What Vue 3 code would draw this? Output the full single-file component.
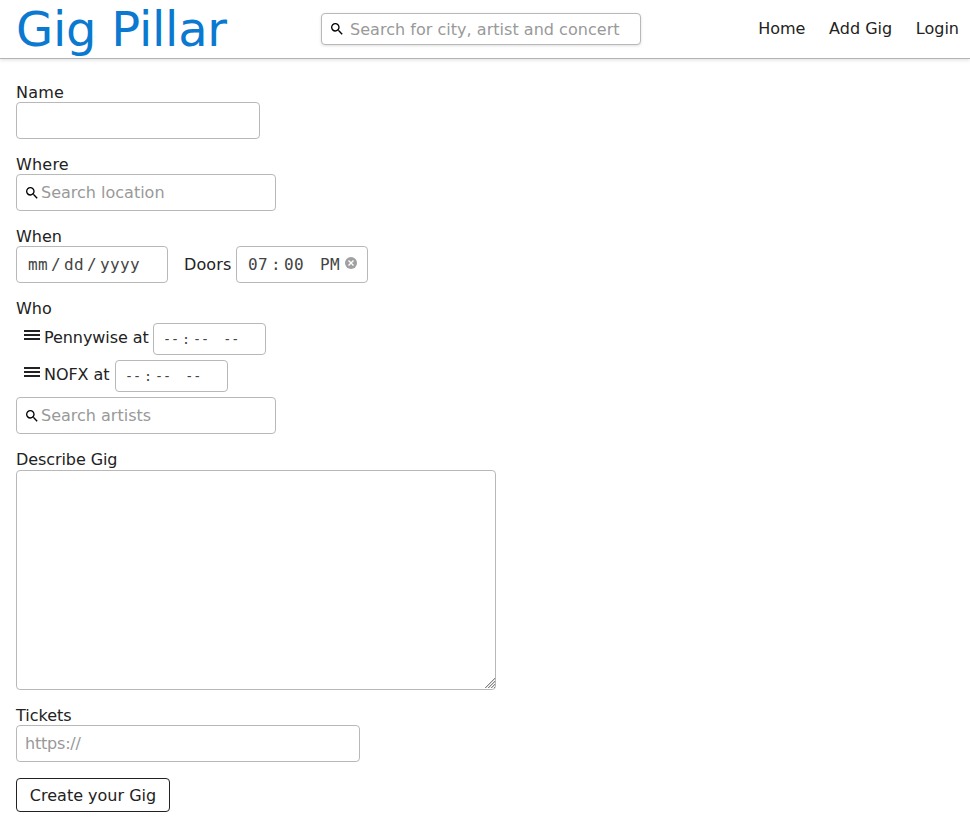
<script setup>
import { ref } from 'vue'

const links = ['Home', 'Add Gig', 'Login']
const artists = ref([{ name: 'Pennywise', width: 104 }, { name: 'NOFX', width: 66 }])
const glass = 'M15.5 14h-.79l-.28-.27A6.471 6.471 0 0 0 16 9.5 6.5 6.5 0 1 0 9.5 16c1.61 0 3.09-.59 4.23-1.57l.27.28v.79l5 4.99L20.49 19l-4.99-5zm-6 0C7.01 14 5 11.99 5 9.5S7.01 5 9.5 5 14 7.01 14 9.5 11.99 14 9.5 14z'
</script>

<template>
  <div class="page">
    <header class="header">
      <h1 class="brand">Gig Pillar</h1>
      <div class="search top-search">
        <svg class="glass" viewBox="0 0 24 24"><path :d="glass" /></svg>
        <input type="text" placeholder="Search for city, artist and concert" />
      </div>
      <nav class="nav">
        <a v-for="link in links" :key="link">{{ link }}</a>
      </nav>
    </header>

    <form class="form" @submit.prevent>
      <div class="field">
        <label class="wide">Name</label>
        <input class="box name" type="text" />
      </div>

      <div class="field">
        <label class="wide">Where</label>
        <div class="box search place">
          <svg class="glass" viewBox="0 0 24 24"><path :d="glass" /></svg>
          <input type="text" placeholder="Search location" />
        </div>
      </div>

      <div class="field">
        <label>When</label>
        <div class="when">
          <div class="box date">
            <span>mm</span><i>/</i><span>dd</span><i>/</i><span>yyyy</span>
          </div>
          <span class="doors">Doors</span>
          <div class="box time">
            <span>07</span><i>:</i><span>00</span><span class="half">PM</span>
            <svg class="clear" viewBox="0 0 12 12">
              <circle cx="6" cy="6" r="6" />
              <path d="M3.5 3.5l5 5M8.5 3.5l-5 5" />
            </svg>
          </div>
        </div>
      </div>

      <div class="field">
        <label>Who</label>
        <ul class="artists">
          <li v-for="artist in artists" :key="artist.name">
            <span class="grip"><b></b><b></b><b></b></span>
            <span class="artist" :style="{ width: artist.width + 'px' }">{{ artist.name }} at</span>
            <div class="box slot">
              <span>--</span><i>:</i><span>--</span><span class="half">--</span>
            </div>
          </li>
        </ul>
        <div class="box search place">
          <svg class="glass" viewBox="0 0 24 24"><path :d="glass" /></svg>
          <input type="text" placeholder="Search artists" />
        </div>
      </div>

      <div class="field about">
        <label>Describe Gig</label>
        <div class="area">
          <textarea class="box"></textarea>
          <svg class="resize" viewBox="0 0 11 11" shape-rendering="crispEdges">
            <path class="light" d="M1.5 10.5l9-9M4.5 10.5l6-6M7.5 10.5l3-3" />
            <path d="M0.5 10.5l10-10M3.5 10.5l7-7M6.5 10.5l4-4M9.5 10.5l1-1" />
          </svg>
        </div>
      </div>

      <div class="field">
        <label>Tickets</label>
        <input class="box tickets" type="text" placeholder="https://" />
      </div>

      <button class="create" type="submit">Create your Gig</button>
    </form>
  </div>
</template>

<style>
body {
  margin: 0;
  background: #fff;
}
</style>

<style scoped>
.page {
  height: 840px;
  overflow: hidden;
  color: #222;
  font: 16px/19px "DejaVu Sans", sans-serif;
}
.page * {
  box-sizing: border-box;
}
.header {
  display: grid;
  grid-template-columns: 305px 320px 1fr;
  align-items: center;
  height: 59px;
  padding: 0 11px 0 16px;
  border-bottom: 1px solid #b3b3b3;
  box-shadow: 0 1px 4px rgba(0, 0, 0, 0.13);
}
.brand {
  margin: 0;
  color: #0b79d0;
  font-size: 48px;
  font-weight: 400;
  line-height: 58px;
  letter-spacing: -0.25px;
}
.nav {
  display: flex;
  justify-content: flex-end;
  gap: 23.7px;
  padding-bottom: 2px;
}
input,
textarea,
button {
  margin: 0;
  color: #222;
  font: inherit;
  outline: 0;
}
::placeholder {
  color: #999;
  opacity: 1;
}
.box,
.top-search {
  border: 1px solid #b8b8b8;
  border-radius: 4px;
  background: #fff;
}
.search {
  display: flex;
  align-items: center;
}
.search input {
  flex: 1;
  min-width: 0;
  height: 19px;
  padding: 0;
  border: 0;
  background: none;
}
.top-search input {
  letter-spacing: 0.03px;
}
.glass {
  flex: none;
  width: 16px;
  height: 16px;
  fill: #000;
}
.top-search {
  height: 32px;
  padding: 0 8px 0 7px;
  gap: 5px;
  box-shadow: 0 1px 3px rgba(0, 0, 0, 0.13);
}
.form {
  display: flex;
  flex-direction: column;
  align-items: flex-start;
  gap: 16px;
  padding: 24px 16px;
}
.field {
  display: flex;
  flex-direction: column;
  align-items: flex-start;
}
label {
  height: 19px;
}
.wide {
  letter-spacing: 0.2px;
}
.box {
  height: 37px;
}
.name {
  width: 244px;
}
.place {
  width: 260px;
  padding: 0 7px;
  gap: 1px;
}
.when {
  display: flex;
  align-items: center;
}
.date,
.time,
.slot {
  display: flex;
  align-items: center;
  color: #444;
  font-family: "DejaVu Sans Mono", monospace;
}
.date,
.time {
  letter-spacing: 0.37px;
}
.date i,
.time i,
.slot i {
  width: 16px;
  font-style: normal;
  text-align: center;
}
.date {
  width: 152px;
  padding-left: 11px;
}
.doors {
  width: 52px;
  margin-left: 16px;
  letter-spacing: 0.1px;
}
.time {
  width: 132px;
  padding-left: 11px;
}
.half {
  margin-left: 16px;
}
.clear {
  width: 12px;
  height: 12px;
  margin: -3px 0 0 5px;
  fill: #a0a0a0;
}
.clear path {
  stroke: #fff;
  stroke-width: 1.4;
}
.artists {
  display: flex;
  flex-direction: column;
  gap: 5px;
  margin: 5px 0;
  padding: 0 0 0 8px;
  list-style: none;
}
.artists li {
  display: flex;
  height: 32px;
}
.grip {
  display: flex;
  flex-direction: column;
  gap: 2px;
  width: 16px;
  margin: 7px 4px 0 0;
}
.grip b {
  height: 2px;
  background: #222;
}
.artist {
  margin: 5px 5px 0 0;
  letter-spacing: -0.07px;
  white-space: nowrap;
}
.slot {
  width: 113px;
  height: 32px;
  padding-left: 9px;
  font-size: 13.333px;
}
.slot i {
  width: 14px;
}
.slot .half {
  margin-left: 14px;
}
.about {
  gap: 1px;
}
.about label {
  letter-spacing: -0.08px;
}
.area {
  position: relative;
  height: 220px;
}
.area textarea {
  display: block;
  width: 480px;
  height: 220px;
  padding: 8px;
  resize: none;
}
.resize {
  position: absolute;
  right: 1px;
  bottom: 1px;
  width: 11px;
  height: 11px;
  fill: none;
  stroke: #888;
}
.resize .light {
  stroke: #ccc;
}
.tickets {
  width: 344px;
  padding: 0 8px;
  letter-spacing: -0.2px;
}
.create {
  width: 154px;
  height: 34px;
  padding: 0;
  border: 1px solid #222;
  border-radius: 4px;
  background: #fff;
}
</style>
